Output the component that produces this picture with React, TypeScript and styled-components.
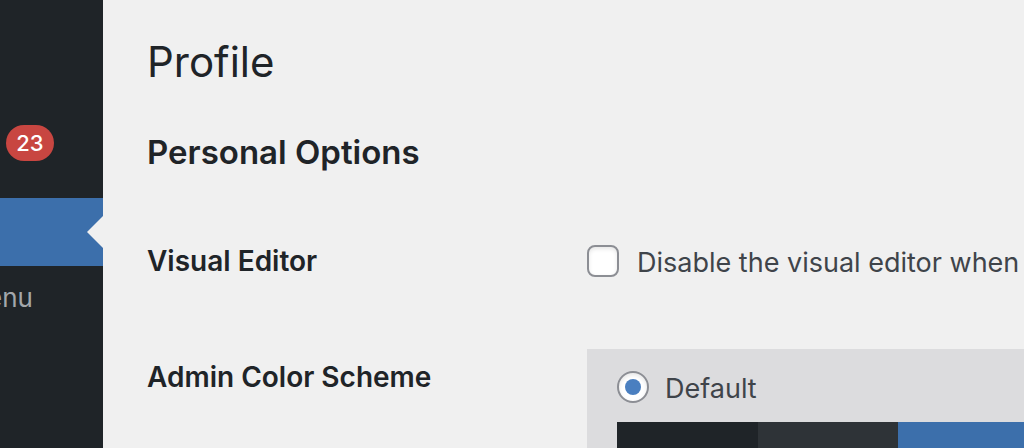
import React from "react";
import styled, { createGlobalStyle } from "styled-components";

const color = {
  page: "#f0f0f0",
  ink: "#1f2428",
  text: "#3f444a",
  blue: "#3c6fab",
  panel: "#dcdcde",
  border: "#8c8e94",
};

const GlobalStyle = createGlobalStyle`
  *, *::before, *::after { box-sizing: border-box; }
  html, body { margin: 0; overflow: hidden; }
  body {
    background: ${color.page};
    color: ${color.text};
    font-family: Inter, "Liberation Sans", sans-serif;
    font-size: 28px;
    line-height: 40px;
  }
`;

const Shell = styled.div`
  display: grid;
  grid-template-columns: 103px minmax(0, 1fr);
  min-height: 100vh;
`;

const Sidebar = styled.nav`
  display: flex;
  flex-direction: column;
  padding-top: 125px;
  background: ${color.ink};
  overflow: hidden;
`;

const Badge = styled.span`
  align-self: flex-start;
  min-width: 48px;
  margin: 0 0 37px 6px;
  border-radius: 18px;
  background: #c84641;
  color: #fff;
  font-size: 22px;
  font-weight: 500;
  line-height: 36px;
  text-align: center;
`;

const CurrentItem = styled.a`
  position: relative;
  height: 68px;
  background: ${color.blue};

  &::after {
    content: "";
    position: absolute;
    top: 18px;
    right: 0;
    border: 16px solid transparent;
    border-left-width: 0;
    border-right-color: ${color.page};
  }
`;

const CollapseButton = styled.button`
  display: flex;
  justify-content: flex-end;
  padding: 12px 70px 12px 0;
  border: 0;
  background: none;
  color: #a3a7ab;
  font: inherit;
  font-size: 26px;
`;

const Content = styled.main`
  padding: 32px 0 0 44px;
  overflow: hidden;
`;

const PageTitle = styled.h1`
  margin: 0;
  color: ${color.ink};
  font-size: 42px;
  font-weight: 400;
  line-height: 60px;
`;

const SectionTitle = styled.h2`
  margin: 40px 0 69px;
  color: ${color.ink};
  font-size: 33px;
  font-weight: 600;
  line-height: 40px;
`;

const Row = styled.div`
  display: grid;
  grid-template-columns: 440px minmax(0, 1fr);
  align-items: start;
`;

const RowTitle = styled.div`
  color: ${color.ink};
  font-weight: 600;
  white-space: nowrap;
`;

const EditorRow = styled(Row)`
  margin-bottom: 68px;
`;

const SchemeTitle = styled(RowTitle)`
  padding-top: 8px;
`;

const Option = styled.label`
  display: flex;
  align-items: center;
  gap: 18px;
  font-size: 27px;
  white-space: nowrap;
`;

const OptionText = styled.span`
  height: 40px;
  padding-top: 2px;
`;

const Control = styled.input`
  appearance: none;
  flex: none;
  width: 32px;
  height: 32px;
  margin: 0;
  border: 2px solid ${color.border};
  border-radius: ${(p) => (p.type === "radio" ? "50%" : "8px")};
  background: #fff;
  box-shadow: inset 0 2px 4px rgba(0, 0, 0, 0.1);

  &[type="radio"]:checked::before {
    content: "";
    display: block;
    width: 16px;
    height: 16px;
    margin: 6px;
    border-radius: 50%;
    background: #4a7fc0;
  }
`;

const Scheme = styled.div`
  width: 622px;
  padding: 18px 30px 30px;
  background: ${color.panel};
`;

const SchemeOption = styled(Option)`
  gap: 16px;
  margin-bottom: 15px;
`;

const Palette = styled.div`
  display: grid;
  grid-template-columns: repeat(4, 1fr);
  height: 40px;
`;

const Swatch = styled.span<{ $tone: string }>`
  background: ${(p) => p.$tone};
`;

const tones = [color.ink, "#2e3337", color.blue, "#7faee0"];

export default function App() {
  return (
    <>
      <GlobalStyle />
      <Shell>
        <Sidebar aria-label="Admin menu">
          <Badge>23</Badge>
          <CurrentItem href="#profile" aria-label="Profile" aria-current="page" />
          <CollapseButton type="button">menu</CollapseButton>
        </Sidebar>
        <Content>
          <PageTitle>Profile</PageTitle>
          <SectionTitle>Personal Options</SectionTitle>
          <EditorRow>
            <RowTitle>Visual Editor</RowTitle>
            <Option>
              <Control type="checkbox" name="rich_editing" />
              <OptionText>Disable the visual editor when</OptionText>
            </Option>
          </EditorRow>
          <Row>
            <SchemeTitle id="scheme-title">Admin Color Scheme</SchemeTitle>
            <Scheme role="radiogroup" aria-labelledby="scheme-title">
              <SchemeOption>
                <Control type="radio" name="admin_color" defaultChecked />
                <OptionText>Default</OptionText>
              </SchemeOption>
              <Palette>
                {tones.map((tone) => (
                  <Swatch key={tone} $tone={tone} />
                ))}
              </Palette>
            </Scheme>
          </Row>
        </Content>
      </Shell>
    </>
  );
}
